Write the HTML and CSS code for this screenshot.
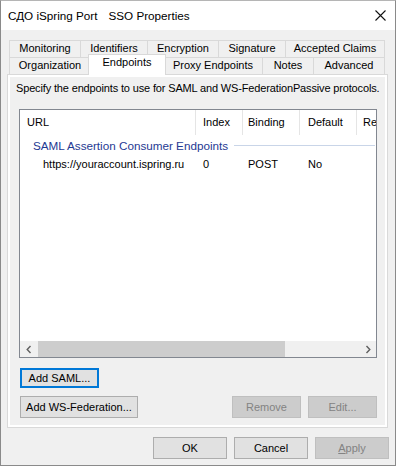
FILE: index.html
```html
<!DOCTYPE html>
<html>
<head>
<meta charset="utf-8">
<link rel="stylesheet" href="styles.css">
</head>
<body>
<div class="window">
  <div class="titlebar">
    <div class="title"><span>СДО iSpring Port</span><span class="title-b">SSO Properties</span></div>
    <svg class="close" width="11" height="11" viewBox="0 0 11 11"><path d="M0.5 0.5L10.5 10.5M10.5 0.5L0.5 10.5" stroke="#111" stroke-width="1.1" fill="none"/></svg>
  </div>
  <div class="content">
    <div class="tabs">
      <div class="tabrow">
        <div class="tab t-mon">Monitoring</div>
        <div class="tab t-ide">Identifiers</div>
        <div class="tab t-enc">Encryption</div>
        <div class="tab t-sig">Signature</div>
        <div class="tab t-acc">Accepted Claims</div>
      </div>
      <div class="tabrow">
        <div class="tab t-org">Organization</div>
        <div class="tab t-end sel">Endpoints</div>
        <div class="tab t-pro">Proxy Endpoints</div>
        <div class="tab t-not">Notes</div>
        <div class="tab t-adv">Advanced</div>
      </div>
    </div>
    <div class="panel">
      <div class="page">
        <div class="desc">Specify the endpoints to use for SAML and WS-FederationPassive protocols.</div>
        <div class="listview">
          <div class="lv-header">
            <div class="hc c1">URL</div>
            <div class="hc c2">Index</div>
            <div class="hc c3">Binding</div>
            <div class="hc c4">Default</div>
            <div class="hc c5">Re</div>
          </div>
          <div class="group">
            <span class="group-name">SAML Assertion Consumer Endpoints</span>
            <span class="group-line"></span>
          </div>
          <div class="lv-row">
            <div class="rc c1 url">https://youraccount.ispring.ru</div>
            <div class="rc c2">0</div>
            <div class="rc c3">POST</div>
            <div class="rc c4">No</div>
            <div class="rc c5"></div>
          </div>
          <div class="lv-fill"></div>
          <div class="hscroll">
            <div class="sb-btn">
              <svg width="6" height="9" viewBox="0 0 6 9"><path d="M4.5 1L1.2 4.5L4.5 8" stroke="#606060" stroke-width="1.4" fill="none"/></svg>
            </div>
            <div class="sb-track"><div class="sb-thumb"></div></div>
            <div class="sb-btn">
              <svg width="6" height="9" viewBox="0 0 6 9"><path d="M1.5 1L4.8 4.5L1.5 8" stroke="#606060" stroke-width="1.4" fill="none"/></svg>
            </div>
          </div>
        </div>
        <div class="btnrow1">
          <button class="btn focus w-saml">Add SAML...</button>
        </div>
        <div class="btnrow2">
          <button class="btn w-ws">Add WS-Federation...</button>
          <div class="spacer"></div>
          <button class="btn disabled w-sm">Remove</button>
          <button class="btn disabled w-sm">Edit...</button>
        </div>
      </div>
    </div>
    <div class="footer">
      <button class="btn w-ft">OK</button>
      <button class="btn w-ft">Cancel</button>
      <button class="btn disabled w-ft"><u>A</u>pply</button>
    </div>
  </div>
</div>
</body>
</html>
```

FILE: styles.css
```css
* { box-sizing: border-box; }
html, body { margin: 0; padding: 0; }
body {
  width: 396px;
  height: 466px;
  font-family: "Liberation Sans", Arial, sans-serif;
  font-size: 11px;
  color: #000;
  background: #fff;
}
.window {
  width: 396px;
  height: 466px;
  border: 1px solid #8a8a8a;
  border-top-color: #b5b5b5;
  display: flex;
  flex-direction: column;
}
.titlebar {
  height: 29px;
  flex: none;
  background: #fff;
  display: flex;
  align-items: center;
  justify-content: space-between;
  padding: 0 9px 1px 7px;
}
.title { font-size: 11.7px; color: #000; }
.title-b { margin-left: 11px; }
.close { display: block; margin-top: 1px; }

.content {
  flex: 1;
  background: #f0f0f0;
  padding: 10px 6px 0 6px;
  display: flex;
  flex-direction: column;
}

/* tabs */
.tabs { margin-left: 2px; width: 376px; flex: none; }
.tabrow { display: flex; height: 17px; align-items: flex-start; }
.tab {
  height: 17px;
  border: 1px solid #d9d9d9;
  border-bottom: none;
  margin-left: -1px;
  background: #f0f0f0;
  text-align: center;
  line-height: 15px;
  white-space: nowrap;
  flex: none;
}
.tab:first-child { margin-left: 0; }
.t-mon { width: 72px; }
.t-ide { width: 68px; }
.t-enc { width: 72px; }
.t-sig { width: 68px; }
.t-acc { width: 100px; }
.t-org { width: 82px; }
.t-end { width: 74px; }
.t-pro { width: 100px; }
.t-not { width: 52px; }
.t-adv { width: 72px; }
.tab.sel {
  position: relative;
  z-index: 2;
  background: #fff;
  width: 78px;
  height: 21px;
  margin: -3px -2px 0 -3px;
}

/* panel */
.panel {
  width: 381px;
  height: 354px;
  flex: none;
  border: 1px solid #d9d9d9;
  background: #fff;
  padding: 2px;
}
.page {
  height: 100%;
  background: #f0f0f0;
  padding: 4px 0 0 0;
  display: flex;
  flex-direction: column;
}
.desc {
  line-height: 15px;
  padding-left: 6px;
  white-space: nowrap;
  letter-spacing: -0.15px;
}

/* list view */
.listview {
  margin: 13px 0 0 9px;
  width: 358px;
  height: 249px;
  border: 1px solid #828790;
  background: #fff;
  display: flex;
  flex-direction: column;
  overflow: hidden;
}
.lv-header, .lv-row {
  display: grid;
  grid-template-columns: 176px 47px 57px 57px 1fr;
  white-space: nowrap;
}
.lv-header { height: 25px; line-height: 25px; }
.hc { border-right: 1px solid #e5e5e5; overflow: hidden; }
.hc.c5 { border-right: none; }
.c1 { padding-left: 7px; }
.c2 { padding-left: 7px; }
.c3 { padding-left: 5px; }
.c4 { padding-left: 8px; }
.c5 { padding-left: 6px; }
.group {
  height: 20px;
  display: flex;
  align-items: center;
  padding: 0 1px 0 13px;
}
.group-name { color: #1f3a93; font-size: 11.7px; white-space: nowrap; }
.group-line {
  flex: 1;
  height: 1px;
  background: #c9d5e8;
  margin-left: 6px;
  margin-top: 1px;
}
.lv-row { height: 19px; line-height: 19px; }
.rc.url { padding-left: 23px; }
.lv-fill { flex: 1; }
.hscroll {
  height: 16px;
  flex: none;
  display: flex;
  background: #f0f0f0;
}
.sb-btn {
  width: 17px;
  display: flex;
  align-items: center;
  justify-content: center;
}
.sb-track { flex: 1; padding: 0 0 0 1px; }
.sb-thumb { width: 247px; height: 100%; background: #cdcdcd; }

/* buttons */
.btn {
  font: inherit;
  color: #000;
  height: 22px;
  border: 1px solid #adadad;
  background: #e1e1e1;
  padding: 0;
  margin: 0;
  line-height: 20px;
  text-align: center;
  white-space: nowrap;
}
.btn.focus { border: 2px solid #0078d7; line-height: 16px; }
.btn.disabled { background: #cccccc; border-color: #bfbfbf; color: #838383; }
.btnrow1 { margin: 10px 0 0 10px; display: flex; }
.w-saml { width: 79px; height: 20px; }
.btnrow2 { margin: 8px 8px 0 10px; display: flex; gap: 7px; }
.spacer { flex: 1; }
.w-ws { width: 118px; }
.w-sm { width: 69px; }
.footer {
  margin-top: 9px;
  display: flex;
  justify-content: flex-end;
  gap: 7px;
}
.w-ft { width: 74px; }
```
